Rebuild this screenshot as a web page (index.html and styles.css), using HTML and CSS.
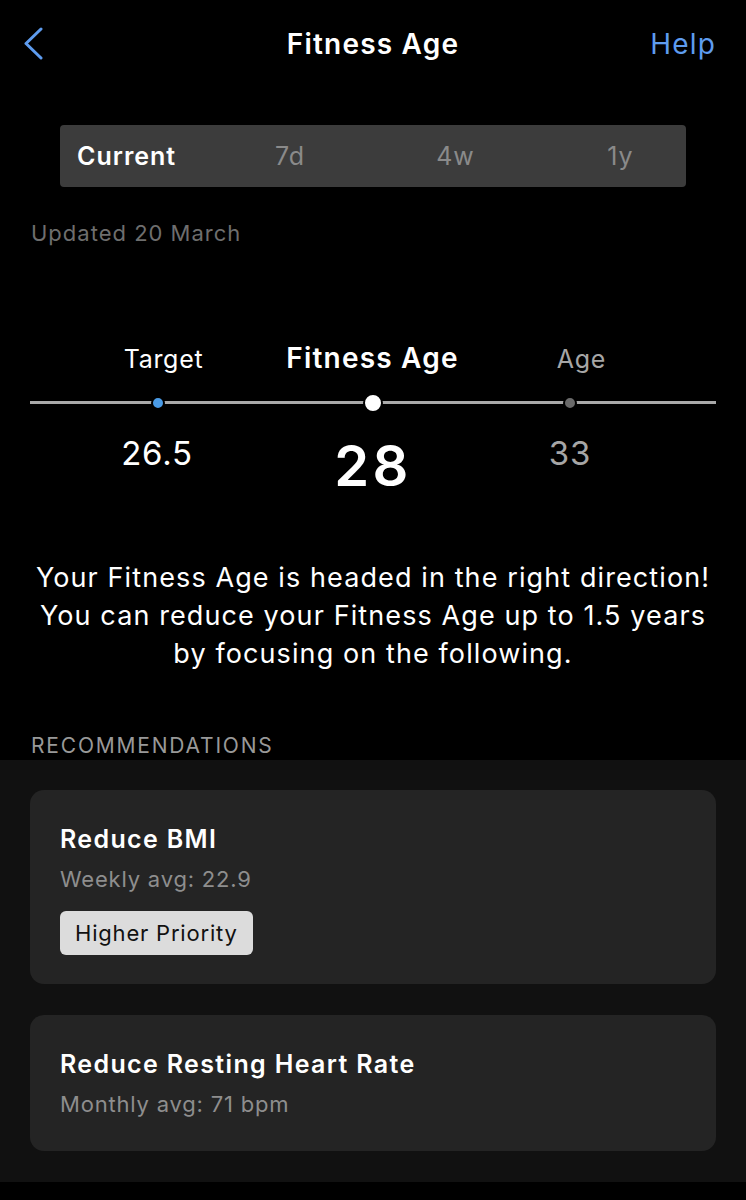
FILE: index.html
```html
<!DOCTYPE html>
<html>
<head>
<meta charset="utf-8">
<link rel="stylesheet" href="styles.css">
</head>
<body>
<div class="page">
  <header class="nav">
    <svg class="back" width="20" height="34" viewBox="0 0 20 34"><path d="M17 2 L2 16.5 L17 31" fill="none" stroke="#5e9cef" stroke-width="3" stroke-linecap="round" stroke-linejoin="round"/></svg>
    <div class="nav-title">Fitness Age</div>
    <div class="nav-help">Help</div>
  </header>

  <div class="seg">
    <div class="seg-item active">Current</div>
    <div class="seg-item">7d</div>
    <div class="seg-item">4w</div>
    <div class="seg-item">1y</div>
  </div>

  <div class="updated">Updated 20 March</div>

  <div class="scale">
    <div class="labels">
      <div class="lbl">Target</div>
      <div class="lbl lbl-main">Fitness Age</div>
      <div class="lbl lbl-age">Age</div>
    </div>
    <div class="track">
      <span class="dot dot-target"></span>
      <span class="dot dot-main"></span>
      <span class="dot dot-age"></span>
    </div>
    <div class="values">
      <div class="val">26.5</div>
      <div class="val val-main">28</div>
      <div class="val val-age">33</div>
    </div>
  </div>

  <p class="summary">Your Fitness Age is headed in the right direction!<br>You can reduce your Fitness Age up to 1.5 years<br>by focusing on the following.</p>

  <div class="section-title">RECOMMENDATIONS</div>

  <section class="recs">
    <div class="card">
      <div class="card-title">Reduce BMI</div>
      <div class="card-sub">Weekly avg: 22.9</div>
      <div class="badge">Higher Priority</div>
    </div>
    <div class="card card-plain">
      <div class="card-title">Reduce Resting Heart Rate</div>
      <div class="card-sub">Monthly avg: 71 bpm</div>
    </div>
  </section>
</div>
</body>
</html>
```
FILE: styles.css
```css
* { box-sizing: border-box; }
html, body { margin: 0; padding: 0; background: #000; }
body {
  font-family: Inter, "Liberation Sans", sans-serif;
  color: #fff;
  width: 746px;
  height: 1200px;
  overflow: hidden;
}
.page { display: flex; flex-direction: column; }

.nav {
  height: 88px;
  display: grid;
  grid-template-columns: 1fr auto 1fr;
  align-items: center;
  padding: 0 30px;
}
.back { display: block; margin-left: -6px; }
.nav-title { font-size: 28px; font-weight: 600; letter-spacing: 1.2px; }
.nav-help { justify-self: end; color: #5e9cef; font-size: 28px; letter-spacing: 1.2px; }

.seg {
  margin: 37px 60px 0;
  height: 62px;
  background: #3c3c3c;
  border-radius: 4px;
  display: grid;
  grid-template-columns: 130px 166px 165px 165px;
  align-items: center;
  padding-left: 17px;
}
.seg-item { font-size: 25px; color: #8a8a8a; text-align: center; letter-spacing: 1px; }
.seg-item.active { color: #fff; font-weight: 600; text-align: left; }

.updated {
  margin: 33px 0 0 31px;
  font-size: 22px;
  letter-spacing: 1px;
  color: #6e6e6e;
  line-height: 26px;
}

.scale { margin-top: 96px; }
.labels {
  display: grid;
  grid-template-columns: 209px 209px 209px;
  padding-left: 59px;
  align-items: center;
}
.lbl { font-size: 25px; text-align: center; line-height: 34px; letter-spacing: 0.7px; }
.lbl-main { font-size: 28px; font-weight: 600; letter-spacing: 1.2px; margin-top: -3px; }
.lbl-age { color: #a6a6a6; }

.track {
  margin: 17px 30px 0;
  height: 20px;
  position: relative;
}
.track::before {
  content: "";
  position: absolute;
  left: 0; right: 0; top: 8px;
  height: 3px;
  background: #a9a9a9;
}
.dot {
  position: absolute;
  border-radius: 50%;
  transform: translate(-50%, -50%);
  top: 10px;
  border: 2px solid #000;
}
.dot-target { left: 128px; width: 14px; height: 14px; background: #4a9be6; }
.dot-main { left: 343px; width: 20px; height: 20px; background: #fff; }
.dot-age { left: 540px; width: 14px; height: 14px; background: #6a6a6a; }

.values {
  margin-top: 20px;
  display: grid;
  grid-template-columns: 200px 232px 162px;
  padding-left: 57px;
  align-items: start;
}
.val { font-size: 33px; text-align: center; line-height: 40px; letter-spacing: 0.75px; }
.val-main { font-size: 56px; font-weight: 600; line-height: 60px; margin-top: 3px; letter-spacing: 3.5px; }
.val-age { color: #a6a6a6; }

.summary {
  margin: 63px 0 0;
  font-size: 27px;
  line-height: 38px;
  letter-spacing: 1.1px;
  text-align: center;
}

.section-title {
  margin: 60px 0 0 31px;
  font-size: 21px;
  letter-spacing: 1.8px;
  color: #999;
  line-height: 26px;
}

.recs {
  margin-top: 1px;
  background: #111;
  padding: 30px 30px 31px;
  display: flex;
  flex-direction: column;
  gap: 31px;
}
.card {
  background: #242424;
  border-radius: 14px;
  padding: 34px 30px 29px;
}
.card-plain { padding-bottom: 34px; }
.card-title { font-size: 25px; font-weight: 600; line-height: 30px; letter-spacing: 1.35px; }
.card-sub { font-size: 22px; color: #8e8e8e; margin-top: 12px; line-height: 26px; letter-spacing: 0.8px; }
.badge {
  display: inline-block;
  margin-top: 19px;
  background: #dcdcdc;
  color: #111;
  font-size: 22px;
  letter-spacing: 0.8px;
  line-height: 26px;
  padding: 9px 15px;
  border-radius: 6px;
}
```
